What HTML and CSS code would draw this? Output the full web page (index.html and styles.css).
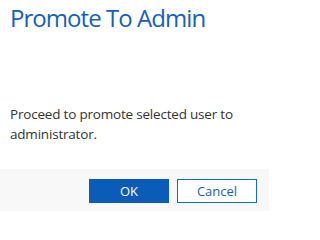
FILE: index.html
```html
<!DOCTYPE html>
<html>
<head>
<meta charset="utf-8">
<link rel="stylesheet" href="styles.css">
</head>
<body>
<div class="dialog">
  <div class="header">
    <h1 class="title">Promote To Admin</h1>
  </div>
  <div class="content">
    <p class="message">Proceed to promote selected user to administrator.</p>
  </div>
  <div class="footer">
    <button class="btn btn-primary">OK</button>
    <button class="btn btn-default">Cancel</button>
  </div>
</div>
</body>
</html>
```
FILE: styles.css
```css
html, body {
  margin: 0;
  padding: 0;
  background: #ffffff;
}
.dialog {
  width: 269px;
  height: 211px;
  display: flex;
  flex-direction: column;
  font-family: "Open Sans", "Noto Sans", sans-serif;
}
.header {
  padding: 2px 10px 0 10px;
  height: 60px;
  box-sizing: border-box;
}
.title {
  margin: 0;
  font-size: 24px;
  font-weight: 400;
  line-height: 32px;
  color: #1660c0;
  letter-spacing: -0.95px;
}
.content {
  flex: 1;
  padding: 44px 10px 0 10px;
}
.message {
  margin: 0;
  font-size: 13.5px;
  line-height: 20px;
  color: #333333;
  letter-spacing: -0.2px;
}
.footer {
  height: 42px;
  background: #f8f8f8;
  display: flex;
  justify-content: flex-end;
  align-items: flex-start;
  gap: 8px;
  padding: 10px 12px 0 0;
  box-sizing: border-box;
}
.btn {
  width: 80px;
  height: 24px;
  box-sizing: border-box;
  font-family: inherit;
  font-size: 13px;
  padding: 0;
  margin: 0;
  cursor: pointer;
}
.btn-primary {
  background: #0b5cb8;
  border: 1px solid #0b5cb8;
  color: #ffffff;
}
.btn-default {
  background: #ffffff;
  border: 1px solid #0a6ed1;
  color: #1660c0;
}
```
